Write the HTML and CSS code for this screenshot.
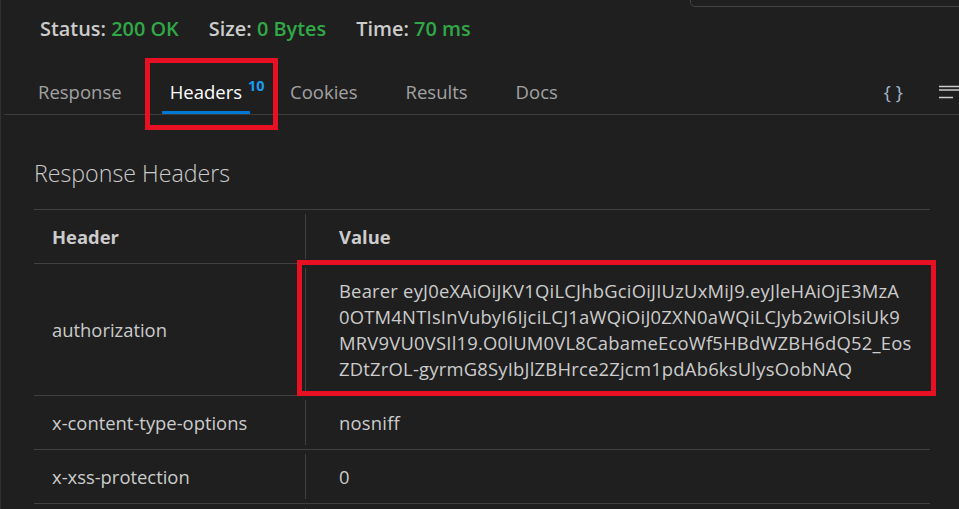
FILE: index.html
```html
<!DOCTYPE html>
<html lang="en">
<head>
<meta charset="utf-8">
<title>Response Headers</title>
<link rel="stylesheet" href="styles.css">
</head>
<body>
<div class="panel">
  <div class="topbox"></div>
  <div class="status">
    <span class="stat">Status: <span class="val">200 OK</span></span>
    <span class="stat">Size: <span class="val">0 Bytes</span></span>
    <span class="stat">Time: <span class="val">70 ms</span></span>
  </div>
  <div class="tabbar">
    <div class="tabs">
      <div class="tab">Response</div>
      <div class="tab active">Headers<span class="count">10</span><span class="mark mark-tab"></span></div>
      <div class="tab">Cookies</div>
      <div class="tab">Results</div>
      <div class="tab">Docs</div>
    </div>
    <div class="tools">
      <span class="braces">{ }</span>
      <svg class="lines" width="20" height="14" viewBox="0 0 20 14">
        <path d="M0 1.5H20M0 5H20M0 12.5H14" stroke="#cccccc" stroke-width="1.3" fill="none"/>
      </svg>
    </div>
  </div>
  <div class="content">
    <h2 class="title">Response Headers</h2>
    <div class="table">
      <div class="row head">
        <div class="k">Header</div>
        <div class="v">Value</div>
      </div>
      <div class="row">
        <div class="k">authorization</div>
        <div class="v">Bearer eyJ0eXAiOiJKV1QiLCJhbGciOiJIUzUxMiJ9.eyJleHAiOjE3MzA<br>0OTM4NTIsInVubyI6IjciLCJ1aWQiOiJ0ZXN0aWQiLCJyb2wiOlsiUk9<br>MRV9VU0VSIl19.O0lUM0VL8CabameEcoWf5HBdWZBH6dQ52_Eos<br>ZDtZrOL-gyrmG8SyIbJlZBHrce2Zjcm1pdAb6ksUlysOobNAQ</div>
        <span class="mark mark-value"></span>
      </div>
      <div class="row">
        <div class="k">x-content-type-options</div>
        <div class="v">nosniff</div>
      </div>
      <div class="row">
        <div class="k">x-xss-protection</div>
        <div class="v">0</div>
      </div>
      <div class="row">
        <div class="k"></div>
        <div class="v"></div>
      </div>
    </div>
  </div>
</div>
</body>
</html>
```

FILE: styles.css
```css
* { box-sizing: border-box; }

html, body {
  margin: 0;
  height: 100%;
  background: #1f1f1f;
}

body {
  font-family: "Open Sans", "Noto Sans", sans-serif;
  color: #cccccc;
}

.panel {
  position: relative;
  height: 509px;
  border-left: 1px solid #303030;
  overflow: hidden;
}

.topbox {
  position: absolute;
  top: -1px;
  right: -1px;
  width: 270px;
  height: 8px;
  border: 1px solid #454545;
  border-radius: 0 0 0 5px;
  background: #1f1f1f;
}

/* status line */
.status {
  display: flex;
  gap: 30px;
  padding: 14px 0 0 39px;
  height: 44px;
  font-size: 19.9px;
  font-weight: 600;
  line-height: 30px;
  color: #cccccc;
}

.val { color: #31a846; }

/* tabs */
.tabbar {
  display: flex;
  justify-content: space-between;
  align-items: flex-end;
  margin-left: 3px;
  border-bottom: 1px solid #3c3c3c;
}

.tabs {
  display: flex;
  gap: 32px;
  padding-left: 26px;
}

.tab {
  position: relative;
  padding: 36px 8px 7px;
  font-size: 18.5px;
  line-height: 24px;
  color: #a2a2a2;
  border-bottom: 3px solid transparent;
}

.tab.active {
  color: #ffffff;
  border-bottom-color: #0078d4;
}

.count {
  position: absolute;
  left: calc(100% - 2px);
  top: 35px;
  font-size: 14.5px;
  line-height: 14px;
  font-weight: 700;
  color: #1a9bf0;
}

.mark {
  position: absolute;
  border: 5px solid #e81123;
  pointer-events: none;
}

.mark-tab {
  left: -17px;
  right: -28px;
  top: 14px;
  bottom: -19px;
}

.tools {
  display: flex;
  align-items: center;
  gap: 36px;
  height: 24px;
  margin-bottom: 10px;
}

.braces {
  font-size: 19px;
  line-height: 24px;
  color: #a3b6cc;
}

.lines { display: block; }

/* content */
.content {
  padding: 0 29px 0 33px;
}

.title {
  margin: 43px 0 21px;
  font-size: 23.2px;
  font-weight: 300;
  line-height: 30px;
  color: #cccccc;
}

.table {
  border-top: 1px solid #404040;
  font-size: 18.4px;
  line-height: 26px;
}

.row {
  position: relative;
  display: grid;
  grid-template-columns: 271px 1fr;
  min-height: 54px;
  border-bottom: 1px solid #404040;
}

.k {
  display: flex;
  align-items: center;
  padding: 13.5px 18px;
}

.v {
  display: flex;
  align-items: center;
  margin: 4px 0;
  padding: 9.5px 18px 9.5px 33px;
  border-left: 1px solid #404040;
  letter-spacing: 0.22px;
}

.row.head .k,
.row.head .v {
  font-weight: 700;
  padding-top: 13px;
  padding-bottom: 13px;
  letter-spacing: 0;
}

.row.head .v {
  padding-top: 9px;
  padding-bottom: 9px;
}

.mark-value {
  left: 263px;
  right: -6px;
  top: -4px;
  bottom: -1px;
}
```
